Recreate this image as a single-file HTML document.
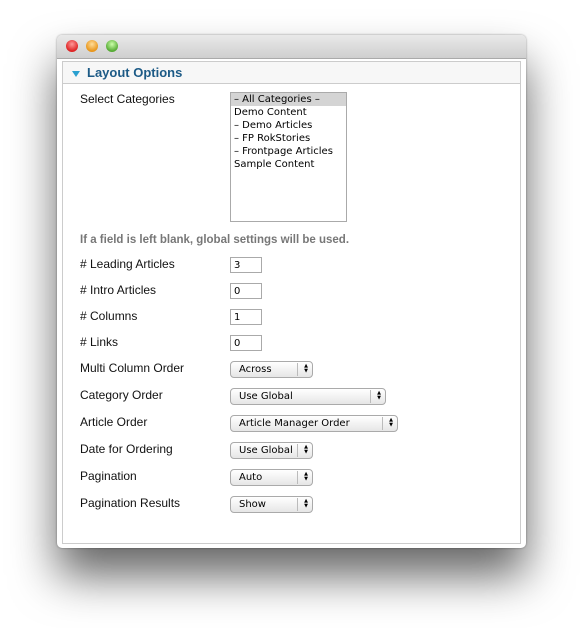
<!DOCTYPE html>
<html><head><style>
body{margin:0;width:583px;height:628px;background:#fff;font-family:"Liberation Sans",sans-serif;position:relative;overflow:hidden}
.win{position:absolute;left:57px;top:35px;width:469px;height:513px;background:#fff;border-radius:5px;box-shadow:0 28px 45px rgba(0,0,0,.6),0 0 2px rgba(0,0,0,.4);overflow:hidden}
.tb{position:absolute;left:0;top:0;width:469px;height:23px;background:linear-gradient(#e9e9e9,#cfcfcf);border-bottom:1px solid #aaa}
.dot{position:absolute;top:5px;width:12px;height:12px;border-radius:50%}
.panel{position:absolute;left:5px;top:26px;width:459px;height:483px;border:1px solid #ccc;box-sizing:border-box}
.hd{height:21px;background:#f7f7f7;border-bottom:1px solid #ccc}
.hd span{position:absolute;left:24px;top:3px;font-weight:bold;font-size:13px;color:#1c5a86}
.tri{position:absolute;left:9px;top:9px;width:0;height:0;border-left:4px solid transparent;border-right:4px solid transparent;border-top:6px solid #2aa0d0}
.l{position:absolute;left:80px;font-size:12px;color:#111}
.in{position:absolute;left:230px;width:32px;height:16px;border:1px solid #aaa;box-sizing:border-box;font-size:10px;padding:2px 0 0 3px;font-family:"DejaVu Sans",sans-serif}
.sel{position:absolute;left:230px;height:17px;border:1px solid #aaa;border-radius:4px;box-sizing:border-box;background:linear-gradient(#fff,#e6e6e6);font-size:10px;padding:2px 0 0 8px;font-family:"DejaVu Sans",sans-serif}
.sel:after{content:"";position:absolute;right:14px;top:1px;bottom:1px;border-left:1px solid #bbb}
.sel b{position:absolute;right:4px;top:2px;font-size:5px;line-height:5px;text-align:center}
.lb{position:absolute;left:230px;top:92px;width:117px;height:130px;border:1px solid #aaa;box-sizing:border-box;font-size:10px;font-family:"DejaVu Sans",sans-serif;line-height:13px}
.lb div{padding-left:3px}
</style></head><body>
<div class="win">
<div class="tb">
<div class="dot" style="left:9px;background:radial-gradient(circle at 50% 35%,#f99,#d22 70%)"></div>
<div class="dot" style="left:29px;background:radial-gradient(circle at 50% 35%,#fd9,#e8951a 70%)"></div>
<div class="dot" style="left:49px;background:radial-gradient(circle at 50% 35%,#cfa,#5a3 70%)"></div>
</div>
<div class="panel"><div class="hd"><div class="tri"></div><span>Layout Options</span></div></div>
</div>
<div class="l" style="top:92px">Select Categories</div>
<div class="lb"><div style="background:#d4d4d4">– All Categories –</div><div>Demo Content</div><div>– Demo Articles</div><div>– FP RokStories</div><div>– Frontpage Articles</div><div>Sample Content</div></div>
<div class="l" style="top:234px;font-weight:bold;color:#777;font-size:11.5px">If a field is left blank, global settings will be used.</div>
<div class="l" style="top:257px"># Leading Articles</div><div class="in" style="top:257px">3</div>
<div class="l" style="top:283px"># Intro Articles</div><div class="in" style="top:283px">0</div>
<div class="l" style="top:309px"># Columns</div><div class="in" style="top:309px">1</div>
<div class="l" style="top:335px"># Links</div><div class="in" style="top:335px">0</div>
<div class="l" style="top:361px">Multi Column Order</div><div class="sel" style="top:361px;width:83px">Across<b>▲<br>▼</b></div>
<div class="l" style="top:388px">Category Order</div><div class="sel" style="top:388px;width:156px">Use Global<b>▲<br>▼</b></div>
<div class="l" style="top:415px">Article Order</div><div class="sel" style="top:415px;width:168px">Article Manager Order<b>▲<br>▼</b></div>
<div class="l" style="top:442px">Date for Ordering</div><div class="sel" style="top:442px;width:83px">Use Global<b>▲<br>▼</b></div>
<div class="l" style="top:469px">Pagination</div><div class="sel" style="top:469px;width:83px">Auto<b>▲<br>▼</b></div>
<div class="l" style="top:496px">Pagination Results</div><div class="sel" style="top:496px;width:83px">Show<b>▲<br>▼</b></div>
</body></html>
